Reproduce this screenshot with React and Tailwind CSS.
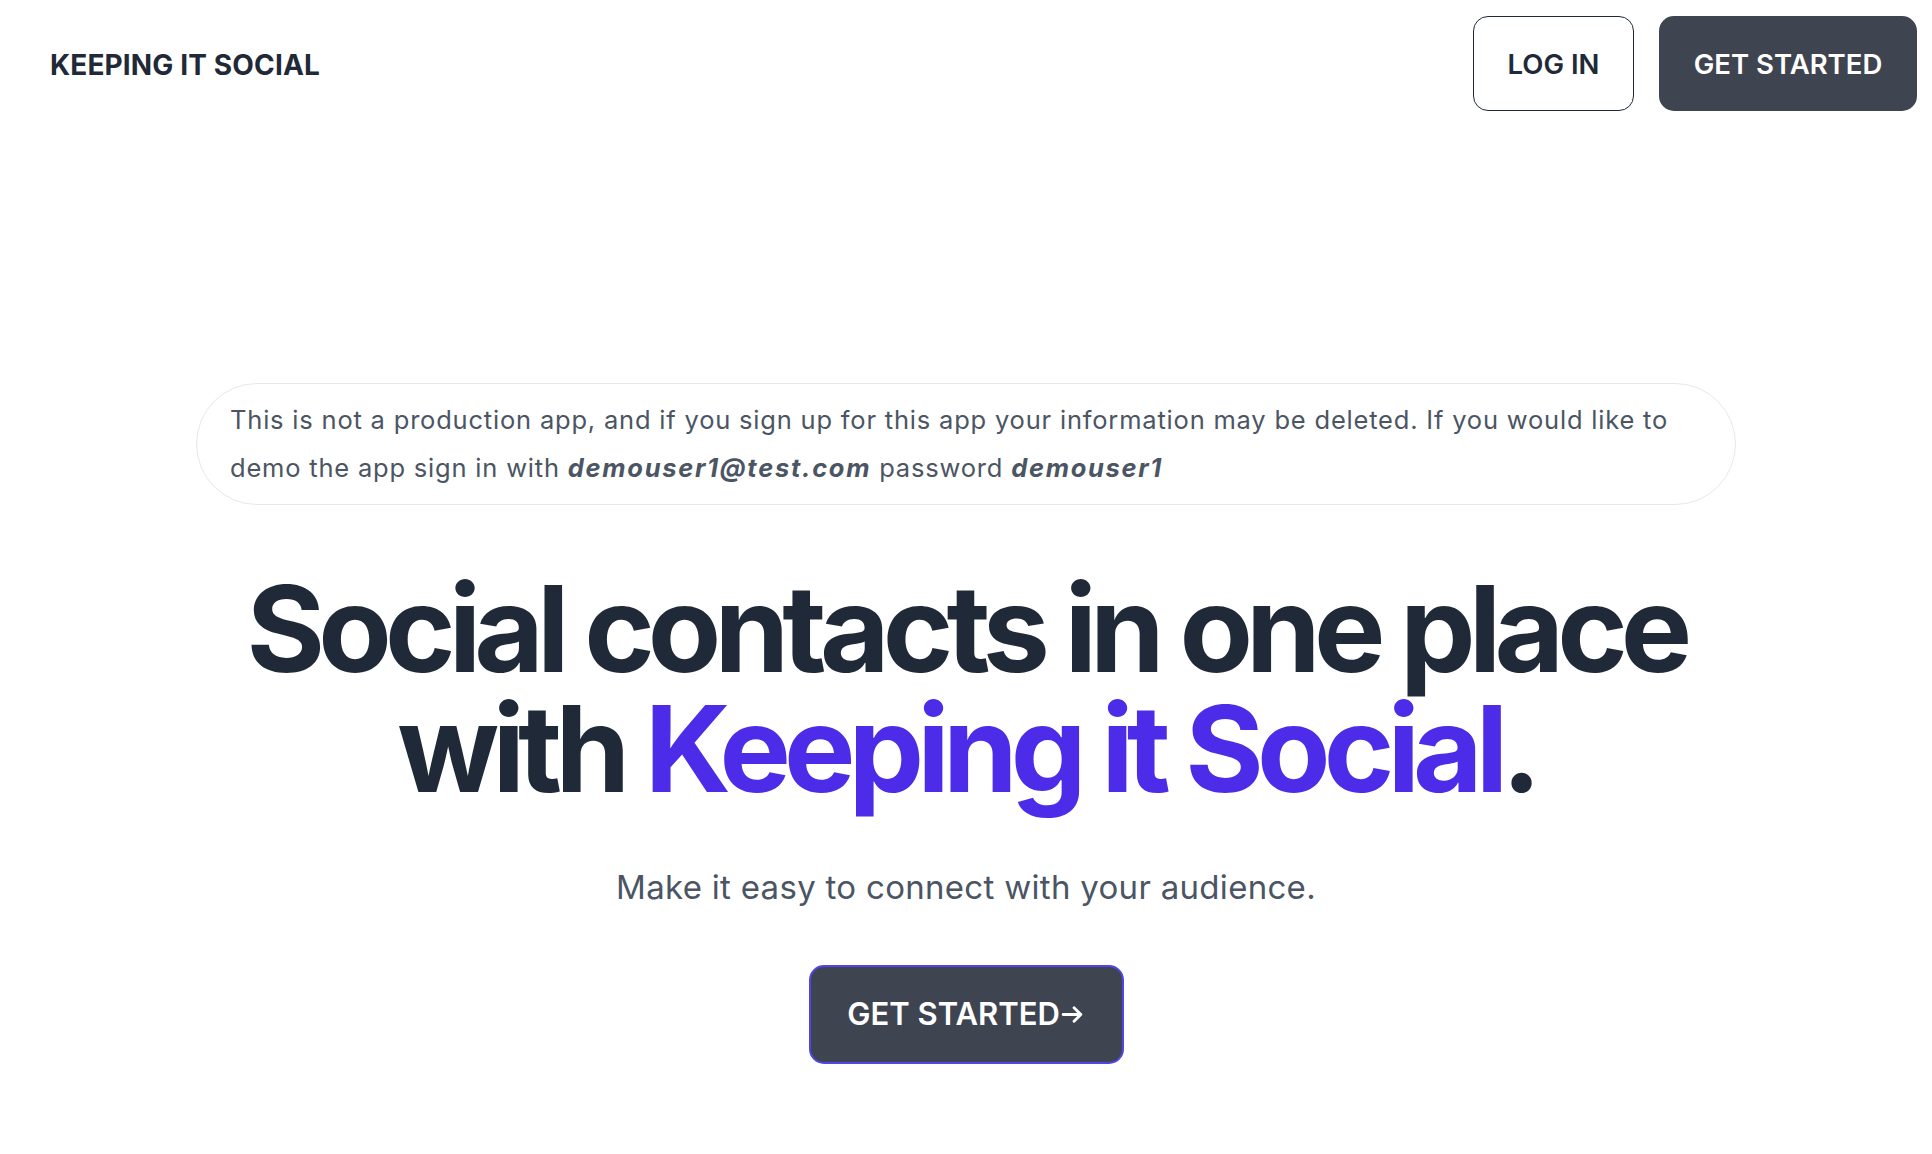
import React from "react";

export default function App() {
  return (
    <div className="min-h-[1154px] w-full bg-white text-[#1f2937]" style={{ fontFamily: "Inter, 'Noto Sans', sans-serif" }}>
      <header className="flex items-center justify-between pl-[50px] pr-[15px] pt-4">
        <div className="mt-[3px] text-[28px] font-bold tracking-[0.005em] text-[#1f2937]">KEEPING IT SOCIAL</div>
        <div className="flex items-center gap-[25px]">
          <button className="h-[95px] w-[161px] rounded-[15px] border-[1.5px] border-[#1f2937] bg-white pt-[3px] text-[27.5px] font-semibold text-[#1f2937]">
            LOG IN
          </button>
          <button className="h-[95px] w-[258px] rounded-[15px] bg-[#3f4451] pt-[3px] text-[27.5px] font-semibold text-white">
            GET STARTED
          </button>
        </div>
      </header>

      <main className="flex flex-col items-center pt-[272px]">
        <div className="w-[1540px] rounded-full border-[1.5px] border-[#e5e7eb] px-[33px] py-[12px] text-[25.5px] leading-[48px] tracking-[0.8px] text-[#4b5563]">
          This is not a production app, and if you sign up for this app your information may be deleted. If you would like to demo the app sign in with{" "}
          <span className="font-bold italic tracking-[1.7px]">demouser1@test.com</span> password{" "}
          <span className="font-bold italic tracking-[1.7px]">demouser1</span>
        </div>

        <h1 className="mt-[64px] text-center text-[120px] font-bold leading-[120px] tracking-[-0.0575em] text-[#1f2937]">
          Social contacts in one place
          <br />
          with <span className="text-[#4c2ce8]">Keeping it Social</span>.
        </h1>

        <p className="mt-[56px] text-[33px] leading-[44px] tracking-[0.3px] text-[#4b5563]">Make it easy to connect with your audience.</p>

        <button className="mt-[56px] flex h-[99px] w-[315px] items-center justify-center rounded-[15px] border-2 border-[#4f46e5] bg-[#3f4451] text-[31px] font-semibold text-white">
          GET STARTED
          <svg width="25" height="25" viewBox="0 0 24 24" fill="none" stroke="currentColor" strokeWidth="2.75" strokeLinecap="round" strokeLinejoin="round">
            <path d="M3 12h17M13.5 5.5 20 12l-6.5 6.5" />
          </svg>
        </button>
      </main>
    </div>
  );
}
